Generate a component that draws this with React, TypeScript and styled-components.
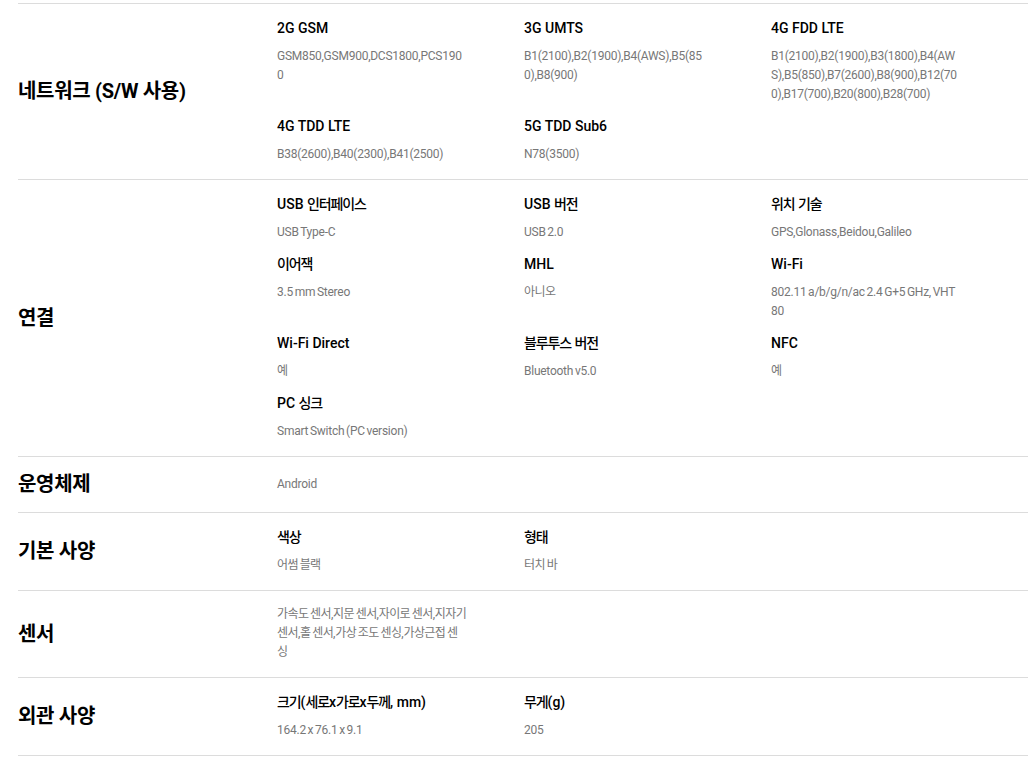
import * as React from 'react';
import styled, { createGlobalStyle } from 'styled-components';

type Spec = { title?: string; value: string };
type Section = { label: string; specs: Spec[] };

const sections: Section[] = [
    {
        label: '네트워크 (S/W 사용)',
        specs: [
            { title: '2G GSM', value: 'GSM850,GSM900,DCS1800,PCS1900' },
            { title: '3G UMTS', value: 'B1(2100),B2(1900),B4(AWS),B5(850),B8(900)' },
            {
                title: '4G FDD LTE',
                value: 'B1(2100),B2(1900),B3(1800),B4(AWS),B5(850),B7(2600),B8(900),B12(700),B17(700),B20(800),B28(700)',
            },
            { title: '4G TDD LTE', value: 'B38(2600),B40(2300),B41(2500)' },
            { title: '5G TDD Sub6', value: 'N78(3500)' },
        ],
    },
    {
        label: '연결',
        specs: [
            { title: 'USB 인터페이스', value: 'USB Type-C' },
            { title: 'USB 버전', value: 'USB 2.0' },
            { title: '위치 기술', value: 'GPS,Glonass,Beidou,Galileo' },
            { title: '이어잭', value: '3.5 mm Stereo' },
            { title: 'MHL', value: '아니오' },
            { title: 'Wi-Fi', value: '802.11 a/b/g/n/ac 2.4 G+5 GHz, VHT80' },
            { title: 'Wi-Fi Direct', value: '예' },
            { title: '블루투스 버전', value: 'Bluetooth v5.0' },
            { title: 'NFC', value: '예' },
            { title: 'PC 싱크', value: 'Smart Switch (PC version)' },
        ],
    },
    {
        label: '운영체제',
        specs: [{ value: 'Android' }],
    },
    {
        label: '기본 사양',
        specs: [
            { title: '색상', value: '어썸 블랙' },
            { title: '형태', value: '터치 바' },
        ],
    },
    {
        label: '센서',
        specs: [{ value: '가속도 센서,지문 센서,자이로 센서,지자기 센서,홀 센서,가상 조도 센싱,가상근접 센싱' }],
    },
    {
        label: '외관 사양',
        specs: [
            { title: '크기(세로x가로x두께, mm)', value: '164.2 x 76.1 x 9.1' },
            { title: '무게(g)', value: '205' },
        ],
    },
];

// the korean glyphs of the cjk font run wider than the original one, so hangul runs get squeezed a bit
function withHangul(text: string) {
    return text.split(/([\u3131-\u318E\uAC00-\uD7A3]+)/).map((part, i) =>
        i % 2 === 1 ? <Hangul key={i}>{part}</Hangul> : part,
    );
}

const App: React.FC = () => {
    return (
        <Root>
            <GlobalStyle />
            {sections.map((section) => (
                <Row key={section.label}>
                    <Label>{section.label}</Label>
                    <SpecGrid>
                        {section.specs.map((spec, i) => (
                            <SpecItem key={i}>
                                {spec.title && <SpecTitle>{withHangul(spec.title)}</SpecTitle>}
                                <SpecValue>{withHangul(spec.value)}</SpecValue>
                            </SpecItem>
                        ))}
                    </SpecGrid>
                </Row>
            ))}
        </Root>
    );
};

const GlobalStyle = createGlobalStyle`
    body {
        margin: 0;
        background: #fff;
        font-family: Roboto, "Noto Sans CJK KR", sans-serif;
        color: #000;
    }
`;

const Root = styled.div`
    padding: 3px 4px 0 18px;
`;

const Row = styled.section`
    display: grid;
    grid-template-columns: 259px 1fr;
    border-top: 1px solid #dcdcdc;

    &:last-child {
        border-bottom: 1px solid #dcdcdc;
    }
`;

const Label = styled.h3`
    margin: 0;
    padding: 15px 0;
    align-self: center;
    font-size: 20px;
    font-weight: 700;
    letter-spacing: -0.3px;
    line-height: 25px;
`;

const SpecGrid = styled.div`
    display: grid;
    grid-template-columns: repeat(3, 247px);
    align-self: center;
    row-gap: 12px;
    padding: 14px 0 15px;
`;

const SpecItem = styled.div`
    display: flex;
    flex-direction: column;
`;

const Hangul = styled.span`
    letter-spacing: var(--hangul-spacing);
`;

const SpecTitle = styled.p`
    --hangul-spacing: -0.08em;
    margin: 0 0 9px;
    font-size: 14px;
    font-weight: 500;
    line-height: 20px;
    color: #000;
`;

const SpecValue = styled.p`
    --hangul-spacing: -0.05em;
    margin: 0;
    width: 190px;
    font-size: 12px;
    line-height: 19px;
    letter-spacing: -0.25px;
    word-spacing: -1px;
    color: #777;
    word-break: break-all;
`;

export default App;
